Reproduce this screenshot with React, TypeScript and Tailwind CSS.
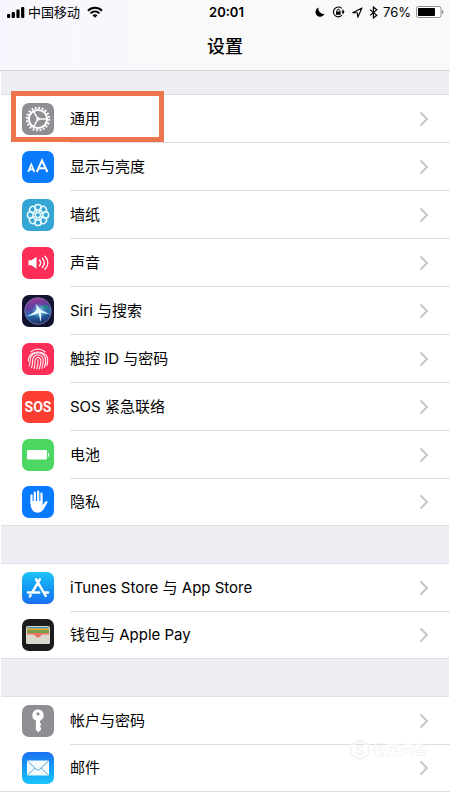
import React from "react";

const GearIcon = () => (
  <svg viewBox="0 0 32 32" className="size-8 rounded-[7px] bg-[#8e8e93]" fill="none" stroke="#fff">
    <circle cx="16" cy="16" r="11.2" strokeWidth="2.2" strokeDasharray="1.8 1.718" />
    <circle cx="16" cy="16" r="9.1" strokeWidth="2" />
    <path d="M16 16H25M16 16L11.5 8.2M16 16L11.5 23.8" strokeWidth="1.5" />
    <circle cx="16" cy="16" r="1.8" fill="#fff" stroke="none" />
  </svg>
);

const DisplayIcon = () => (
  <svg viewBox="0 0 32 32" className="size-8 rounded-[7px] bg-[#0a7cfb]" fill="none" stroke="#fff">
    <path d="M6.2 20.8L9.3 13.5L12.4 20.8M7.4 18.4H11.2" strokeWidth="1.7" />
    <path d="M14.8 21L20 9.5L25.4 21M16.6 17.2H23.6" strokeWidth="2" />
  </svg>
);

const WallpaperIcon = () => (
  <svg viewBox="0 0 32 32" className="size-8 rounded-[7px] bg-[#35a5d3]" fill="none" stroke="#e9fbff">
    {[0, 45, 90, 135, 180, 225, 270, 315].map((a) => (
      <g key={a} transform={`rotate(${a} 16 16)`}>
        <ellipse cx="16" cy="8.3" rx="3.2" ry="2.9" strokeWidth="1.5" />
        <path d="M16 14L13.8 11M16 14L18.2 11" strokeWidth="1" />
      </g>
    ))}
    <circle cx="16" cy="16" r="2.5" strokeWidth="1.2" />
  </svg>
);

const SoundIcon = () => (
  <svg viewBox="0 0 32 32" className="size-8 rounded-[7px] bg-[#fc2d57]" fill="none" stroke="#fff" strokeLinecap="round">
    <path d="M6.5 13.3H9.5L14.5 9.8V21.7L9.5 18.3H6.5Z" fill="#fff" stroke="none" />
    <path d="M17.5 13C19 14.8 19 16.8 17.5 18.7M20.3 11.1C22.8 14.1 22.8 17.5 20.3 20.5M23 9.3C26.7 13.3 26.7 18.3 23 22.3" strokeWidth="1.4" />
  </svg>
);

const SiriIcon = () => (
  <svg viewBox="0 0 32 32" className="size-8 rounded-[7px] bg-[#121331]">
    <defs>
      <linearGradient id="siriOrb" x1="0.4" y1="0" x2="0.6" y2="1">
        <stop offset="0" stopColor="#9c3a94" />
        <stop offset="0.35" stopColor="#5a3fa0" />
        <stop offset="0.6" stopColor="#2a6fb4" />
        <stop offset="1" stopColor="#1a2a5c" />
      </linearGradient>
      <radialGradient id="siriGlow">
        <stop offset="0" stopColor="#fff" />
        <stop offset="0.3" stopColor="#9ae2f5" stopOpacity="0.7" />
        <stop offset="1" stopColor="#49a3d3" stopOpacity="0" />
      </radialGradient>
    </defs>
    <circle cx="16" cy="16" r="13.3" fill="url(#siriOrb)" stroke="#807bac" strokeWidth="0.8" />
    <path d="M17 15C20 8 27 8 28 16C25 14 20 14 17 15Z" fill="#1c8a80" opacity="0.75" />
    <circle cx="17" cy="16" r="8" fill="url(#siriGlow)" />
    <path d="M4.5 21C9 19.5 13.5 17 15 14C14.5 12 14 10.5 13.5 9C16 11 17 13 18 14.5C21 16 24 17.5 28 19C24 19 21 18 19 17.5C19.3 20.5 19.2 23.5 18.6 27C17.6 23.5 17.4 20.5 16.6 18C12.5 20 8.5 21 4.5 21Z" fill="#e7ffff" />
  </svg>
);

const TouchIcon = () => (
  <svg viewBox="0 0 32 32" className="size-8 rounded-[7px] bg-[#fc2d57]" fill="none" stroke="#ffe7ec" strokeWidth="1.15" strokeLinecap="round">
    <path d="M9 8.8C13 5.3 19 5.3 23 8.8" />
    <path d="M6.5 18C5.3 6 26.7 6 25.7 18C25.6 20 25.2 21.5 24.8 22.5" />
    <path d="M7.2 23C9 18 7.6 17 8.6 14.5C11 8.3 21 8.3 23.3 14.8C24.2 18 23.6 21.5 22.4 24.5" />
    <path d="M9.5 24.7C11.3 21 10 18 11 15.3C13 10.8 19.2 10.8 21 15.5C21.8 18.5 20.7 22.5 19.7 25.5" />
    <path d="M12 25.5C13.7 21.8 12.4 19.5 13.3 16.5C14.5 13.5 17.8 13.7 18.7 16.5C19.4 20 18.2 23.2 17.1 26" />
    <path d="M14.6 26C16.2 22.5 16.3 19.5 16 16.7" />
  </svg>
);

const SosIcon = () => (
  <span className="flex size-8 items-center justify-center rounded-[7px] bg-[#fc3d31] font-['Roboto',sans-serif] text-sm font-bold text-white">
    SOS
  </span>
);

const BatteryIcon = () => (
  <svg viewBox="0 0 32 32" className="size-8 rounded-[7px] bg-[#4cd763]" fill="#fff">
    <rect x="5" y="11" width="20" height="9.5" rx="1.2" />
    <path d="M26 13.5C27.5 14 27.5 17.5 26 18Z" />
  </svg>
);

const HandIcon = () => (
  <svg viewBox="0 0 32 32" className="size-8 rounded-[7px] bg-[#087aff]" fill="none" stroke="#fff" strokeWidth="2.2" strokeLinecap="round">
    <path d="M9.5 17V9.3M12.8 16V6.5M16.2 16V5.7M19.5 16V7.5" />
    <path d="M8.4 15H20.6V19L23.5 15.6C24.4 14.7 26 15 25.5 16.2C23.8 19.5 22.3 23 19.8 25.3C17 27.5 12.5 27 10.3 24C8.7 21.7 8.4 18 8.4 15Z" fill="#fff" stroke="none" />
  </svg>
);

const StoreIcon = () => (
  <svg viewBox="0 0 32 32" className="size-8 rounded-[7px] bg-linear-to-b from-[#1fc2f6] to-[#1b6df1]" fill="none" stroke="#fff" strokeWidth="2.5" strokeLinecap="round">
    <path d="M17.8 7.3L10.7 19.6M14.1 7.3L23.7 24M8.6 23.2L7.9 24.4M6 20.6H17.2M22.3 20.6H26" />
  </svg>
);

const WalletIcon = () => (
  <svg viewBox="0 0 32 32" className="size-8 rounded-[7px] bg-[#1c1c1e]">
    <rect x="4" y="7" width="24" height="18" rx="2" fill="#d9d6cb" />
    <path d="M5 10V9.5C5 8.5 5.5 8 6.5 8H25.5C26.5 8 27 8.5 27 9.5V10Z" fill="#3f94b5" />
    <rect x="5" y="9.3" width="22" height="2" fill="#e3ac35" />
    <rect x="5" y="11" width="22" height="3.5" fill="#7d9c45" />
    <path d="M4 14.5H28V23C28 24.5 27.3 25 26 25H6C4.7 25 4 24.5 4 23Z" fill="#dbd8ce" />
    <path d="M5 14H27V15.6H20.5C19 15.6 18.6 18.6 16 18.6C13.4 18.6 13 15.6 11.5 15.6H5Z" fill="#ed7468" />
  </svg>
);

const KeyIcon = () => (
  <svg viewBox="0 0 32 32" className="size-8 rounded-[7px] bg-[#8e8e93]">
    <path fillRule="evenodd" fill="#fff" d="M16 4.5A5.7 5.7 0 0 0 13.9 15.5V25L16.3 27.3L19 24.8V22.8L17.7 21.5L19 20.2V18.7L17.8 17.5L18.5 15.3A5.7 5.7 0 0 0 16 4.5ZM16 7.3A1.6 1.6 0 1 1 16 10.5A1.6 1.6 0 1 1 16 7.3Z" />
  </svg>
);

const MailIcon = () => (
  <svg viewBox="0 0 32 32" className="size-8 rounded-[7px] bg-linear-to-b from-[#1d70f2] to-[#1bc4fa]" strokeLinejoin="round">
    <rect x="5" y="8.5" width="22" height="15" rx="1" fill="#f4fbff" />
    <path d="M5.5 9L14.3 17.3Q16 18.8 17.7 17.3L26.5 9M5.5 23L13 16M26.5 23L19 16" fill="none" stroke="#4f9ec8" strokeWidth="0.9" />
  </svg>
);

const Chevron = () => (
  <svg viewBox="0 0 10 16" className="mr-[21px] h-4 w-2.5 shrink-0" fill="none" stroke="#c4c4c9" strokeWidth="1.9">
    <path d="M1.5 1.5L8 8L1.5 14.5" />
  </svg>
);

type Item = { label: string; icon: () => React.ReactElement; marked?: boolean };

const groups: Item[][] = [
  [
    { label: "通用", icon: GearIcon, marked: true },
    { label: "显示与亮度", icon: DisplayIcon },
    { label: "墙纸", icon: WallpaperIcon },
    { label: "声音", icon: SoundIcon },
    { label: "Siri 与搜索", icon: SiriIcon },
    { label: "触控 ID 与密码", icon: TouchIcon },
    { label: "SOS 紧急联络", icon: SosIcon },
    { label: "电池", icon: BatteryIcon },
    { label: "隐私", icon: HandIcon },
  ],
  [
    { label: "iTunes Store 与 App Store", icon: StoreIcon },
    { label: "钱包与 Apple Pay", icon: WalletIcon },
  ],
  [
    { label: "帐户与密码", icon: KeyIcon },
    { label: "邮件", icon: MailIcon },
  ],
];

const Row = ({ label, icon: Icon, marked }: Item) => (
  <li className="group relative">
    <button type="button" className="flex h-12 w-full items-center pl-[22px] text-left group-last:h-[46px]">
      <Icon />
      <span className="ml-4 flex h-full flex-1 items-center justify-between border-b border-[#dedee1] group-last:border-0">
        <span className="pt-px">{label}</span>
        <Chevron />
      </span>
    </button>
    {marked && <span className="pointer-events-none absolute -top-1 left-[11px] h-[51px] w-[153px] border-5 border-[#ed754d]" />}
  </li>
);

const StatusBar = () => (
  <div className="grid h-6 grid-cols-[1fr_auto_1fr] items-center pr-1.5 pl-[7px] text-[13px] leading-6">
    <div className="flex items-center">
      <svg viewBox="0 0 18 12" className="h-3 w-[18px]">
        <rect x="0" y="8" width="3.2" height="4" rx="1" />
        <rect x="4.7" y="6" width="3.2" height="6" rx="1" />
        <rect x="9.4" y="3.5" width="3.2" height="8.5" rx="1" />
        <rect x="14.1" y="1" width="3.2" height="11" rx="1" />
      </svg>
      <span className="ml-[3px]">中国移动</span>
      <svg viewBox="0 0 16 12" className="ml-[7px] h-3 w-4" fill="none" stroke="#000" strokeWidth="2">
        <path d="M1 4.7C5 .7 11 .7 15 4.7M3.5 7.4C6.1 4.9 9.9 4.9 12.5 7.4" />
        <path d="M5.5 9.2C7 7.8 9 7.8 10.5 9.2L8 11.7Z" fill="#000" stroke="none" />
      </svg>
    </div>
    <span className="pl-0.5 font-semibold">20:01</span>
    <div className="flex items-center justify-end">
      <svg viewBox="0 0 10 10" className="size-2.5">
        <path d="M3.6 0.6A4.7 4.7 0 1 0 9.5 6.9A5.2 5.2 0 0 1 3.6 0.6Z" />
      </svg>
      <svg viewBox="0 0 13 12" className="ml-[7px] h-3 w-[13px]" fill="none" stroke="#000">
        <path d="M9.7 2.4A4.9 4.9 0 1 0 10 9.2M10.8 8A4.9 4.9 0 0 0 10.7 3.6" strokeWidth="1.1" />
        <path d="M9.2 5.2H12.8L11 7.2Z" fill="#000" stroke="none" />
        <rect x="4" y="5.4" width="4.6" height="3.4" fill="#000" stroke="none" />
        <path d="M4.9 5.5V4.6A1.4 1.4 0 0 1 7.7 4.6V5.5" strokeWidth="0.9" />
      </svg>
      <svg viewBox="0 0 11 11" className="ml-[7px] size-[11px]" fill="none" stroke="#000" strokeLinejoin="round">
        <path d="M.8 5.7L10 1L5.8 10.2L5.3 5.8Z" strokeWidth="1.1" />
      </svg>
      <svg viewBox="0 0 9 13" className="ml-[6px] h-[13px] w-[9px]" fill="none" stroke="#000" strokeWidth="1.2">
        <path d="M1 3.6L7.8 9.2L4.4 12V1L7.8 3.8L1 9.4" />
      </svg>
      <span className="ml-[5px]">76%</span>
      <svg viewBox="0 0 28 12" className="ml-[5px] h-3 w-7">
        <rect x="0.5" y="0.5" width="24.5" height="11" rx="2.2" fill="#fff" stroke="#8d8d8d" />
        <rect x="2" y="2" width="17" height="8" rx="0.7" />
        <path d="M26 4C28 4.3 28 7.7 26 8Z" fill="#8d8d8d" />
      </svg>
    </div>
  </div>
);

const Watermark = () => (
  <div className="pointer-events-none absolute top-[739px] right-[22px] flex items-center gap-0.5 text-[#f4f4f4]">
    <svg viewBox="0 0 20 22" className="h-[22px] w-5" fill="none" stroke="currentColor" strokeWidth="2">
      <path d="M10 1.5L18.5 6V16L10 20.5L1.5 16V6Z" />
      <path d="M13.5 8C11 6 6.5 7 6.8 9C7 11.5 13.3 10.5 13.3 13C13.3 15.5 8.5 15.8 6.3 13.8" />
    </svg>
    <span className="text-sm leading-5">侵西问答</span>
  </div>
);

export default function App() {
  return (
    <div className="relative min-h-screen bg-white font-['Inter','Noto_Sans_CJK_SC',sans-serif] text-[15px] text-black">
      <header className="border-b border-[#d3d3d8] bg-linear-to-r from-[#f6f6fe] to-[#f9f9fa] to-40%">
        <StatusBar />
        <h1 className="h-[46px] text-center text-lg leading-[46px] font-medium">设置</h1>
      </header>
      <main>
        {groups.map((items, i) => (
          <section key={i}>
            <div className={i === 0 ? "mx-px h-6 border-b border-[#dedee3] bg-[#efeef5]" : "mx-px h-[39px] border-y border-[#dedee3] bg-[#efeef5]"} />
            <ul className={i === 2 ? "border-b border-[#dedee1]" : ""}>
              {items.map((item) => (
                <Row key={item.label} {...item} />
              ))}
            </ul>
          </section>
        ))}
      </main>
      <Watermark />
    </div>
  );
}
